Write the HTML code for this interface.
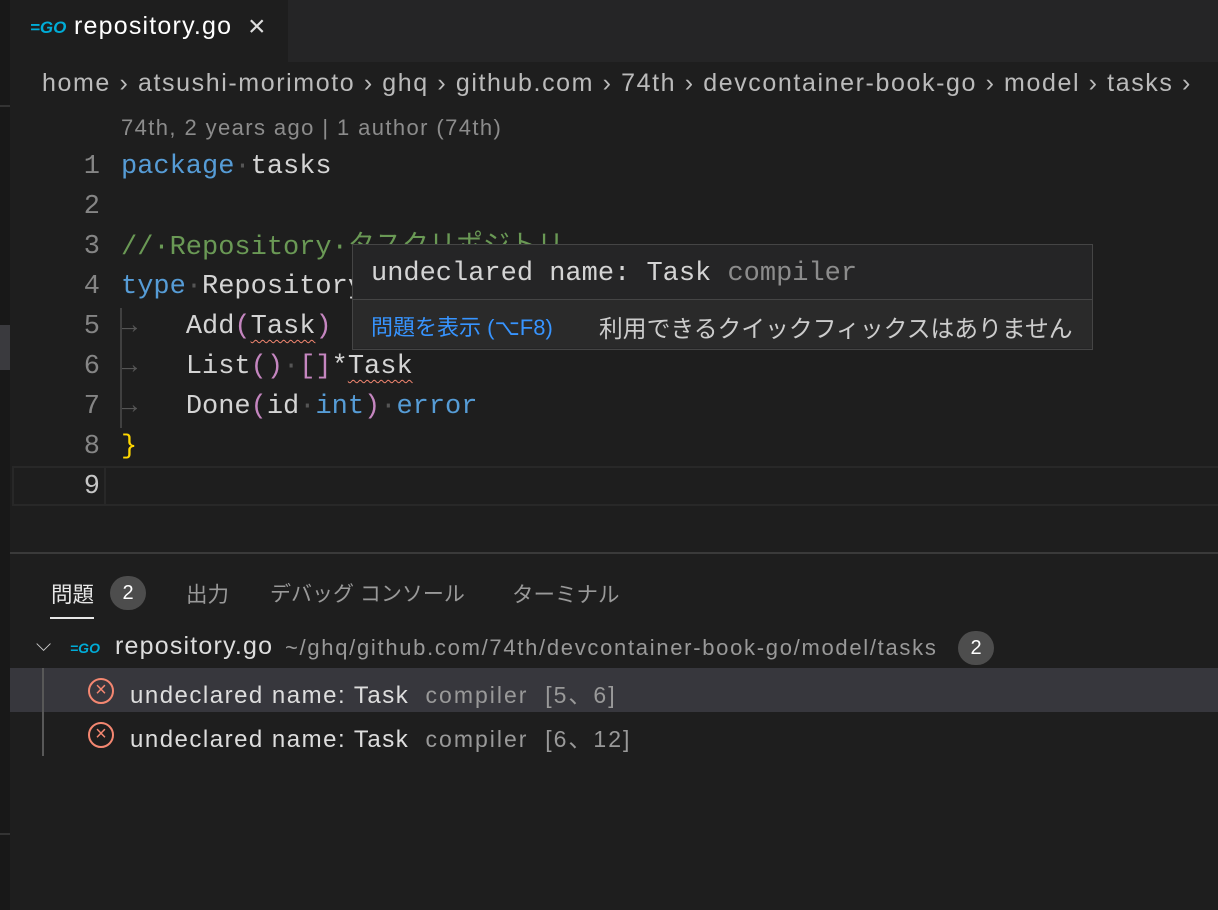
<!DOCTYPE html>
<html><head><meta charset="utf-8"><style>
body{margin:0;width:1218px;height:910px;background:#1e1e1e;overflow:hidden;position:relative;font-family:"Liberation Sans","Noto Sans CJK JP",sans-serif;}
.a{position:absolute;white-space:pre;}
.m{font-family:"Liberation Mono","Noto Sans CJK JP",monospace;font-size:27px;line-height:40px;}
.ln{color:#858585;width:100px;text-align:right;left:0}
.kw{color:#569cd6}.cm{color:#6a9955}.pn{color:#c586c0}.tx{color:#d4d4d4}.dot{color:#555}
.sq{text-decoration:underline wavy #f48771;text-decoration-thickness:1px;text-underline-offset:6px}
</style></head><body>
<div class="a" style="left:0;top:0;width:10px;height:910px;background:#181818"></div>
<div class="a" style="left:0;top:325px;width:10px;height:45px;background:#3a3a3e"></div>
<div class="a" style="left:0;top:105px;width:10px;height:2px;background:#333"></div>
<div class="a" style="left:10px;top:0;width:1208px;height:62px;background:#252526"></div>
<div class="a" style="left:10px;top:0;width:278px;height:62px;background:#1e1e1e"></div>
<div class="a" style="left:30px;top:18px;font:italic bold 17px 'Liberation Sans';color:#00acd7">=GO</div>
<div class="a" style="left:74px;top:12px;font-size:25px;letter-spacing:1.2px;color:#fff">repository.go</div>
<div class="a" style="left:248px;top:10px;font-size:30px;color:#ddd">×</div>
<div class="a" style="left:42px;top:69px;font-size:25px;letter-spacing:1.6px;color:#bbb">home › atsushi-morimoto › ghq › github.com › 74th › devcontainer-book-go › model › tasks ›</div>
<div class="a" style="left:121px;top:115px;font-size:22px;letter-spacing:1.4px;color:#8c8c8c">74th, 2 years ago | 1 author (74th)</div>
<div class="a m ln" style="top:147px">1</div>
<div class="a m" style="left:121px;top:147px"><span class="kw">package</span><span class="dot">·</span><span class="tx">tasks</span></div>
<div class="a m ln" style="top:187px">2</div>
<div class="a m ln" style="top:227px">3</div>
<div class="a m cm" style="left:121px;top:228px">//·Repository·タスクリポジトリ</div>
<div class="a m ln" style="top:267px">4</div>
<div class="a m" style="left:121px;top:267px"><span class="kw">type</span><span class="dot">·</span><span class="tx">Repository</span></div>
<div class="a m ln" style="top:307px">5</div>
<div class="a m" style="left:121px;top:307px"><span class="dot">→   </span><span class="tx">Add</span><span class="pn">(</span><span class="tx sq">Task</span><span class="pn">)</span></div>
<div class="a m ln" style="top:347px">6</div>
<div class="a m" style="left:121px;top:347px"><span class="dot">→   </span><span class="tx">List</span><span class="pn">()</span><span class="dot">·</span><span class="pn">[]</span><span class="tx">*</span><span class="tx sq">Task</span></div>
<div class="a m ln" style="top:387px">7</div>
<div class="a m" style="left:121px;top:387px"><span class="dot">→   </span><span class="tx">Done</span><span class="pn">(</span><span class="tx">id</span><span class="dot">·</span><span class="kw">int</span><span class="pn">)</span><span class="dot">·</span><span class="kw">error</span></div>
<div class="a m ln" style="top:427px">8</div>
<div class="a m" style="left:121px;top:427px;color:#ffd700">}</div>
<div class="a" style="left:120px;top:308px;width:2px;height:120px;background:#404040"></div>
<div class="a" style="left:12px;top:466px;width:1206px;height:36px;border:2px solid #282828"></div>
<div class="a" style="left:104px;top:468px;width:2px;height:36px;background:#282828"></div>
<div class="a m ln" style="top:467px;color:#c6c6c6">9</div>
<div class="a" style="left:352px;top:244px;width:739px;height:104px;background:#252526;border:1px solid #454545"></div>
<div class="a" style="left:353px;top:299px;width:739px;height:1px;background:#454545"></div>
<div class="a" style="left:353px;top:300px;width:739px;height:48px;background:#2a2a2a"></div>
<div class="a m" style="left:371px;top:254px"><span class="tx">undeclared name: Task </span><span style="color:#8c8c8c">compiler</span></div>
<div class="a" style="left:371px;top:310px;font-size:22px;color:#3794ff">問題を表示 (⌥F8)</div>
<div class="a" style="left:599px;top:309px;font-size:23.8px;color:#ccc">利用できるクイックフィックスはありません</div>
<div class="a" style="left:10px;top:552px;width:1208px;height:2px;background:#3a3a3a"></div>
<div class="a" style="left:51px;top:578px;font-size:21.5px;color:#e7e7e7">問題</div>
<div class="a" style="left:50px;top:617px;width:44px;height:2px;background:#e7e7e7"></div>
<div class="a" style="left:110px;top:576px;width:36px;height:34px;border-radius:17px;background:#4d4d4d;color:#fff;font-size:20px;text-align:center;line-height:34px">2</div>
<div class="a" style="left:186px;top:578px;font-size:21.5px;color:#999">出力</div>
<div class="a" style="left:270px;top:578px;font-size:21px;color:#999">デバッグ コンソール</div>
<div class="a" style="left:512px;top:578px;font-size:21.5px;color:#999">ターミナル</div>
<div class="a" style="left:36px;top:634px;font-size:20px;color:#ccc">⌵</div>
<div class="a" style="left:70px;top:640px;font:italic bold 14px 'Liberation Sans';color:#00acd7">=GO</div>
<div class="a" style="left:115px;top:632px;font-size:25px;letter-spacing:1.2px;color:#ddd">repository.go</div>
<div class="a" style="left:285px;top:635px;font-size:22px;letter-spacing:1.7px;color:#999">~/ghq/github.com/74th/devcontainer-book-go/model/tasks</div>
<div class="a" style="left:958px;top:631px;width:36px;height:34px;border-radius:17px;background:#4d4d4d;color:#fff;font-size:20px;text-align:center;line-height:34px">2</div>
<div class="a" style="left:10px;top:668px;width:1208px;height:44px;background:#37373d"></div>
<div class="a" style="left:42px;top:668px;width:2px;height:88px;background:#585858"></div>
<div class="a" style="left:88px;top:678px;width:22px;height:22px;border:2px solid #f48771;border-radius:50%;color:#f48771;font-size:20px;line-height:21px;text-align:center">×</div>
<div class="a" style="left:130px;top:676px;font-size:24px;letter-spacing:1.5px;color:#ddd">undeclared name: Task  <span style="color:#999;font-size:23px;letter-spacing:2px">compiler  [5、6]</span></div>
<div class="a" style="left:88px;top:722px;width:22px;height:22px;border:2px solid #f48771;border-radius:50%;color:#f48771;font-size:20px;line-height:21px;text-align:center">×</div>
<div class="a" style="left:130px;top:720px;font-size:24px;letter-spacing:1.5px;color:#ddd">undeclared name: Task  <span style="color:#999;font-size:23px;letter-spacing:2px">compiler  [6、12]</span></div>
<div class="a" style="left:0;top:833px;width:10px;height:2px;background:#333"></div>
</body></html>
